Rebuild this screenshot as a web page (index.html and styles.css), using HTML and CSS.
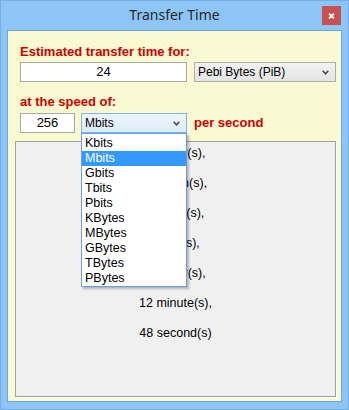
FILE: index.html
```html
<!DOCTYPE html>
<html lang="en">
<head>
    <meta charset="UTF-8">
    <title>Transfer Time</title>
    <link rel="stylesheet" href="styles.css">
</head>
<body>
    <div class="window">
        <div class="titlebar">
            <span></span>
            <span class="title">Transfer Time</span>
            <span class="close">
                <svg width="7" height="6" viewBox="0 0 7 6"><path d="M1 0.5 L6 5.5 M6 0.5 L1 5.5" stroke="#fff" stroke-width="1.8" fill="none"/></svg>
            </span>
        </div>

        <div class="client">
            <div class="label">Estimated transfer time for:</div>
            <div class="row">
                <div class="field size-field">24</div>
                <div class="select unit-select">
                    <span>Pebi Bytes (PiB)</span>
                    <svg class="chevron" width="7" height="5" viewBox="0 0 7 5"><path d="M0.7 0.8 L3.5 3.8 L6.3 0.8" stroke="#4a4a4a" stroke-width="1.6" fill="none"/></svg>
                </div>
            </div>

            <div class="label second">at the speed of:</div>
            <div class="row row-speed">
                <div class="field speed-field">256</div>
                <div class="select-wrap">
                    <div class="select active">
                        <span>Mbits</span>
                        <svg class="chevron" width="7" height="5" viewBox="0 0 7 5"><path d="M0.7 0.8 L3.5 3.8 L6.3 0.8" stroke="#4a4a4a" stroke-width="1.6" fill="none"/></svg>
                    </div>
                    <ul class="dropdown">
                        <li>Kbits</li>
                        <li class="selected">Mbits</li>
                        <li>Gbits</li>
                        <li>Tbits</li>
                        <li>Pbits</li>
                        <li>KBytes</li>
                        <li>MBytes</li>
                        <li>GBytes</li>
                        <li>TBytes</li>
                        <li>PBytes</li>
                    </ul>
                </div>
                <span class="label per">per second</span>
            </div>

            <div class="result">
                <div>25 year(s),</div>
                <div>6 month(s),</div>
                <div>2 week(s),</div>
                <div>1 day(s),</div>
                <div>16 hour(s),</div>
                <div>12 minute(s),</div>
                <div>48 second(s)</div>
            </div>
        </div>
    </div>
</body>
</html>
```

FILE: styles.css
```css
* {
    margin: 0;
    padding: 0;
    box-sizing: border-box;
}

body {
    font-family: "Liberation Sans", Arial, sans-serif;
    width: 349px;
    height: 410px;
    overflow: hidden;
}

.window {
    width: 349px;
    height: 410px;
    background: #8dc6f6;
    border: 1px solid #75aee0;
    display: flex;
    flex-direction: column;
}

.titlebar {
    height: 29px;
    display: grid;
    grid-template-columns: 1fr auto 1fr;
    align-items: start;
}

.title {
    font-family: "Noto Sans", "Open Sans", sans-serif;
    font-size: 14px;
    color: #262626;
    line-height: 28px;
}

.close {
    justify-self: end;
    margin-top: 5px;
    margin-right: 7px;
    width: 19px;
    height: 19px;
    background: #c75050;
    display: flex;
    justify-content: center;
    align-items: center;
}

.client {
    flex: 1;
    margin: 0 6px 7px;
    background: #fafad2;
    border: 1px solid #6ea6d8;
    padding: 13px 5px 4px 12px;
    display: flex;
    flex-direction: column;
}

.label {
    font-size: 13px;
    font-weight: bold;
    line-height: 16px;
    color: #d00000;
    margin-bottom: 2px;
}

.label.second {
    margin-top: 12px;
    margin-bottom: 3px;
}

.label.per {
    margin: 0 0 0 7px;
}

.row {
    display: flex;
    align-items: center;
    height: 20px;
}

.field {
    height: 20px;
    background: #fff;
    border: 1px solid #a9a9a9;
    font-size: 13px;
    line-height: 18px;
    text-align: center;
    color: #000;
}

.size-field {
    width: 167px;
    margin-right: 7px;
}

.speed-field {
    width: 55px;
    margin-right: 6px;
}

.select {
    height: 20px;
    border: 1px solid #acacac;
    background: linear-gradient(#f2f2f2, #e4e4e4);
    font-size: 12px;
    color: #000;
    display: flex;
    align-items: center;
    justify-content: space-between;
    padding: 0 6px 0 3px;
}

.unit-select {
    width: 142px;
}

.select-wrap {
    position: relative;
    width: 106px;
}

.select.active {
    border-color: #7eb4ea;
    background: linear-gradient(#ecf4fc, #dcecfc);
}

.dropdown {
    list-style: none;
    position: absolute;
    top: 20px;
    left: 0;
    width: 106px;
    background: #fff;
    border: 1px solid #6a9fdc;
    padding-top: 2px;
    box-shadow: 2px 2px 2px rgba(0, 0, 0, 0.25);
    z-index: 5;
}

.dropdown li {
    font-size: 12.5px;
    line-height: 15px;
    height: 15px;
    padding-left: 3px;
    color: #000;
}

.dropdown li.selected {
    background: #3399ff;
    color: #fff;
}

.result {
    flex: 1;
    margin: 8px 0 0 -5px;
    background: #f0f0f0;
    border: 1px solid #a0a0a0;
    box-shadow: 1px 1px 0 #fff;
    padding-top: 3px;
    display: flex;
    flex-direction: column;
    align-items: center;
    gap: 14px;
}

.result div {
    font-size: 12.5px;
    line-height: 16px;
    color: #000;
}
```
